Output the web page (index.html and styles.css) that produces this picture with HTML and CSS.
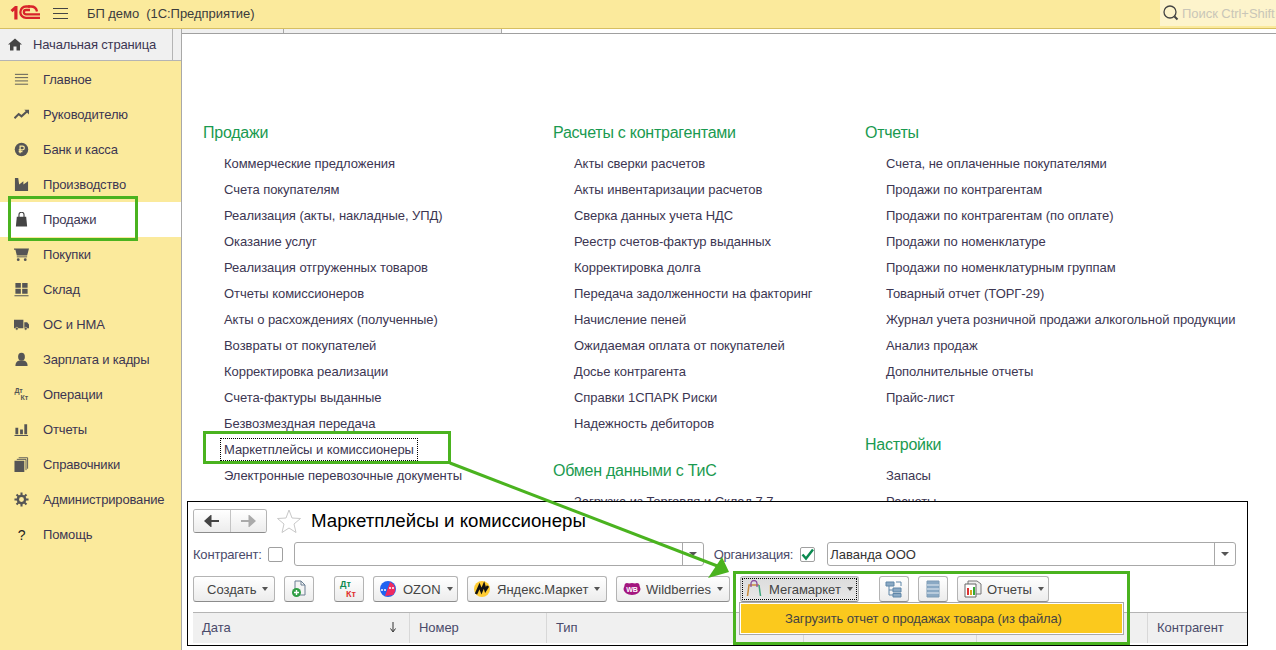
FILE: index.html
```html
<!DOCTYPE html>
<html lang="ru">
<head>
  <meta charset="UTF-8" />
  <title>БП демо (1С:Предприятие)</title>
  <link rel="stylesheet" href="styles.css">
</head>
<body>
  <header class="topbar">
    <svg class="logo" viewBox="0 0 30 15" width="30" height="15">
      <path d="M0.500 5 L5 1 H7.500 V14.500 H4.300 V5.500 L2.500 7.200 Z" fill="#d8232a"/>
      <path d="M20 1.500 H16 A5.500 5.500 0 0 0 16 12.800 H30 M20 5 H16 A2.100 2.100 0 0 0 16 9.300 H30" fill="none" stroke="#d8232a" stroke-width="2.300"/>
      <path d="M18 1.500 H21 Q26 1.500 27 6.500" fill="none" stroke="#d8232a" stroke-width="2.300"/>
    </svg>
    <div class="burger"><i></i><i></i><i></i></div>
    <div class="app-title">БП демо&nbsp; (1С:Предприятие)</div>
    <div class="search">
      <svg viewBox="0 0 18 18" width="18" height="18"><circle cx="8" cy="8" r="6" fill="none" stroke="#444" stroke-width="1.300"/><path d="M12.500 12.500 L15.500 15.500" stroke="#444" stroke-width="2"/></svg>
      <span>Поиск Ctrl+Shift</span>
    </div>
  </header>

  <div class="main">
    <aside class="sidebar">
      <div class="home-row">
        <div class="home-tab">
          <svg class="home-icon" viewBox="0 0 14 13" width="14" height="13"><path d="M7 0.500 L14 6.500 H12 V12.500 H8.500 V8.500 H5.500 V12.500 H2 V6.500 H0 Z" fill="#444"/></svg>
          <span>Начальная страница</span>
        </div>
      </div>
      <nav class="nav">
        <a class="nav-item"><svg viewBox="0 0 16 16"><path d="M1 2.500 H15 M1 6 H15 M1 9.500 H15 M1 13 H15" stroke="#555" stroke-width="1" fill="none"/></svg>Главное</a>
        <a class="nav-item"><svg viewBox="0 0 16 16"><path d="M0.500 12 L5 7.500 L8 10 L14 4.500" stroke="#555" stroke-width="2.200" fill="none"/><path d="M11 3 H16 V8 Z" fill="#555"/></svg>Руководителю</a>
        <a class="nav-item"><svg viewBox="0 0 16 16"><circle cx="8" cy="8" r="7.200" fill="#555"/><path d="M6.500 12 V4.500 H9 A2 2 0 0 1 9 8.500 H5 M5 10.300 H9" stroke="#fbea9c" stroke-width="1.300" fill="none"/></svg>Банк и касса</a>
        <a class="nav-item"><svg viewBox="0 0 16 16"><path d="M1 15 V1 H4.500 L5.500 8 L10 4.500 V8 L15 4.500 V15 Z" fill="#555"/></svg>Производство</a>
        <a class="nav-item active"><svg viewBox="0 0 16 16"><path d="M3 5 H13 L14 15.500 H2 Z" fill="#444"/><path d="M5.300 7 V3 A2.700 2.700 0 0 1 10.700 3 V7" stroke="#444" stroke-width="1.200" fill="none"/></svg>Продажи</a>
        <a class="nav-item"><svg viewBox="0 0 16 16"><path d="M0 1.500 H16 L14 9 H3 L1.500 3 H0 Z" fill="#555"/><path d="M3 10 H14 V11 H3 Z" fill="#555"/><circle cx="4.500" cy="13.500" r="1.500" fill="#555"/><circle cx="12" cy="13.500" r="1.500" fill="#555"/></svg>Покупки</a>
        <a class="nav-item"><svg viewBox="0 0 16 16"><path d="M1.500 1 H7.300 V6 H1.500 Z M8.700 1 H14.500 V6 H8.700 Z M1.500 7.300 H7.300 V12.500 H1.500 Z M8.700 7.300 H14.500 V12.500 H8.700 Z M0.500 14 H15.500 V15.300 H0.500 Z" fill="#555"/></svg>Склад</a>
        <a class="nav-item"><svg viewBox="0 0 16 16"><path d="M0 3 H10 V12 H0 Z M11 5.500 H14 L16 8 V12 H11 Z" fill="#555"/><circle cx="3" cy="12.500" r="1.500" fill="#555" stroke="#fbea9c" stroke-width="0.600"/><circle cx="12.500" cy="12.500" r="1.500" fill="#555" stroke="#fbea9c" stroke-width="0.600"/></svg>ОС и НМА</a>
        <a class="nav-item"><svg viewBox="0 0 16 16"><ellipse cx="8" cy="5" rx="3.600" ry="4.300" fill="#555"/><path d="M1.500 15 Q1.500 9.500 6 9 H10 Q14.500 9.500 14.500 15 Z" fill="#555"/></svg>Зарплата и кадры</a>
        <a class="nav-item"><svg viewBox="0 0 16 16"><text class="dt-small" x="0.500" y="6.500">Дт</text><text class="dt-small" x="7" y="14">Кт</text></svg>Операции</a>
        <a class="nav-item"><svg viewBox="0 0 16 16"><path d="M1.500 6 H4.500 V13 H1.500 Z M6.500 8 H9.500 V13 H6.500 Z M11 2.500 H14 V13 H11 Z M0.500 13.800 H15 V15 H0.500 Z" fill="#555"/></svg>Отчеты</a>
        <a class="nav-item"><svg viewBox="0 0 16 16"><path d="M0.500 4 H11 V16 H0.500 Z" fill="#555"/><path d="M3 2.500 H12.800 V14 M5 0.800 H14.500 V12.500" stroke="#555" stroke-width="1" fill="none"/></svg>Справочники</a>
        <a class="nav-item"><svg viewBox="0 0 16 16"><circle cx="8" cy="8" r="3.900" fill="none" stroke="#555" stroke-width="2.600"/><path d="M8 0.500 V15.500 M0.500 8 H15.500 M2.700 2.700 L13.300 13.300 M13.300 2.700 L2.700 13.300" stroke="#555" stroke-width="2.200" stroke-dasharray="2.800 9.400"/></svg>Администрирование</a>
        <a class="nav-item"><span class="help-mark">?</span>Помощь</a>
      </nav>
    </aside>

    <section class="workspace">
      <div class="tabs"><i class="tab tab-one"></i><i class="tab tab-two"></i></div>
      <div class="sections">
        <div class="col">
          <h2>Продажи</h2>
          <a>Коммерческие предложения</a>
          <a>Счета покупателям</a>
          <a>Реализация (акты, накладные, УПД)</a>
          <a>Оказание услуг</a>
          <a>Реализация отгруженных товаров</a>
          <a>Отчеты комиссионеров</a>
          <a>Акты о расхождениях (полученные)</a>
          <a>Возвраты от покупателей</a>
          <a>Корректировка реализации</a>
          <a>Счета-фактуры выданные</a>
          <a>Безвозмездная передача</a>
          <a><span class="focused">Маркетплейсы и комиссионеры</span></a>
          <a>Электронные перевозочные документы</a>
        </div>
        <div class="col">
          <h2>Расчеты с контрагентами</h2>
          <a>Акты сверки расчетов</a>
          <a>Акты инвентаризации расчетов</a>
          <a>Сверка данных учета НДС</a>
          <a>Реестр счетов-фактур выданных</a>
          <a>Корректировка долга</a>
          <a>Передача задолженности на факторинг</a>
          <a>Начисление пеней</a>
          <a>Ожидаемая оплата от покупателей</a>
          <a>Досье контрагента</a>
          <a>Справки 1СПАРК Риски</a>
          <a>Надежность дебиторов</a>
          <h2>Обмен данными с ТиС</h2>
          <a>Загрузка из Торговля и Склад 7.7</a>
        </div>
        <div class="col">
          <h2>Отчеты</h2>
          <a>Счета, не оплаченные покупателями</a>
          <a>Продажи по контрагентам</a>
          <a>Продажи по контрагентам (по оплате)</a>
          <a>Продажи по номенклатуре</a>
          <a>Продажи по номенклатурным группам</a>
          <a>Товарный отчет (ТОРГ-29)</a>
          <a>Журнал учета розничной продажи алкогольной продукции</a>
          <a>Анализ продаж</a>
          <a>Дополнительные отчеты</a>
          <a>Прайс-лист</a>
          <h2>Настройки</h2>
          <a>Запасы</a>
          <a>Расчеты</a>
        </div>
      </div>
    </section>
  </div>

  <!-- вставка со скриншотом формы поверх раздела -->
  <div class="inset">
    <div class="form-head">
      <div class="nav-btns">
        <button class="nav-btn"><svg viewBox="0 0 16 12" width="16" height="12"><path d="M15 6 H5 M6.500 1.500 L1.500 6 L6.500 10.500 Z" stroke="#444" stroke-width="2" fill="#444"/></svg></button>
        <button class="nav-btn"><svg viewBox="0 0 16 12" width="16" height="12"><path d="M1 6 H11 M9.500 1.500 L14.500 6 L9.500 10.500 Z" stroke="#aaa" stroke-width="2" fill="#aaa"/></svg></button>
      </div>
      <svg class="star" viewBox="0 0 24 24" width="24" height="24"><path d="M12 1 L15 9 L23.500 9.500 L17 15 L19 23.500 L12 19 L5 23.500 L7 15 L0.500 9.500 L9 9 Z" fill="#fff" stroke="#c8c8c8"/></svg>
      <h1>Маркетплейсы и комиссионеры</h1>
    </div>

    <div class="filters">
      <label class="field-label">Контрагент:</label>
      <span class="check"></span>
      <div class="select select-left"><span></span><b class="select-arrow"></b></div>
      <label class="field-label org-label">Организация:</label>
      <span class="check check-org">
        <svg viewBox="0 0 15 15" width="15" height="15"><path d="M2.500 7.500 L6 11.500 L13 2.500" stroke="#0a8a50" stroke-width="2.400" fill="none"/></svg>
      </span>
      <div class="select select-right"><span>Лаванда ООО</span><b class="select-arrow"></b></div>
    </div>

    <div class="toolbar">
      <button class="btn btn-create">Создать<i class="caret"></i></button>
      <button class="btn btn-icon">
        <svg viewBox="0 0 16 18" width="16" height="18"><path d="M4 1 H10 L14 5 V15 H4 Z M10 1 V5 H14" fill="#f4f4f4" stroke="#6a7f92"/><circle cx="5.500" cy="12.500" r="4.500" fill="#2f9e44"/><path d="M3 12.500 H8 M5.500 10 V15" stroke="#fff" stroke-width="1.400"/></svg>
      </button>
      <button class="btn btn-icon gap-left">
        <svg viewBox="0 0 20 20" width="20" height="20"><text class="dt-green" x="1" y="8">Дт</text><text class="dt-red" x="7" y="18">Кт</text></svg>
      </button>
      <button class="btn btn-brand btn-ozon">
        <svg viewBox="0 0 16 16" width="16" height="16"><circle cx="8" cy="8" r="8" fill="#1f62f0"/><path d="M10 1 A8 8 0 0 1 13 14 L5 15 Z" fill="#ef2a5f"/><path d="M1 9 H7 M9 7 H15" stroke="#fff" stroke-width="1.600" stroke-dasharray="2 1"/></svg>
        OZON<i class="caret"></i>
      </button>
      <button class="btn btn-brand btn-ya">
        <svg viewBox="0 0 16 16" width="16" height="16"><circle cx="8" cy="8" r="8" fill="#fc3"/><path d="M2 13 L5.500 5 L7.500 10 L10 4 L11.500 9 L14 5" stroke="#111" stroke-width="2.600" fill="none"/></svg>
        Яндекс.Маркет<i class="caret"></i>
      </button>
      <button class="btn btn-brand btn-wb">
        <svg viewBox="0 0 18 14" width="18" height="14"><ellipse cx="9" cy="7" rx="8.500" ry="6" fill="#a3167f"/><circle cx="4" cy="3.500" r="2.500" fill="#a3167f"/><circle cx="14" cy="3.500" r="2.500" fill="#a3167f"/><text class="wb-mark" x="9" y="9.500">WB</text></svg>
        Wildberries<i class="caret"></i>
      </button>
      <button class="btn btn-brand btn-pressed gap-mega">
        <span class="dotted">
          <svg viewBox="0 0 16 18" width="16" height="18"><path d="M1.500 16 L3 5 H13" fill="none" stroke="#c98a3c" stroke-width="1.500"/><path d="M13 5 L14.500 16" stroke="#3fa67c" stroke-width="1.500"/><path d="M5 7 V3.500 A3 3 0 0 1 11 3.500 V7" fill="none" stroke="#8a4f9e" stroke-width="1.300"/></svg>
          Мегамаркет<i class="caret"></i>
        </span>
      </button>
      <button class="btn btn-icon gap-left">
        <svg viewBox="0 0 18 18" width="18" height="18"><path d="M1 2 H9 V6 H1 Z M8 8 H16 V12 H8 Z M8 13.500 H16 V17 H8 Z" fill="#8aa9c4" stroke="#5f86a8"/><path d="M11 2 H16 V6 M4 6 V15 H8 M4 10 H8" fill="none" stroke="#5f86a8"/></svg>
      </button>
      <button class="btn btn-icon">
        <svg viewBox="0 0 14 18" width="14" height="18"><path d="M1 1 H13 V17 H1 Z" fill="#8aa9c4" stroke="#7d9bb5"/><path d="M1 5 H13 M1 9 H13 M1 13 H13" stroke="#e6eef4" stroke-width="1.200"/></svg>
      </button>
      <button class="btn btn-brand btn-reports">
        <svg viewBox="0 0 18 18" width="18" height="18"><path d="M4 1 H13 L17 4 V14 H4 Z" fill="#eee" stroke="#777"/><path d="M1 4 H12 V17 H1 Z" fill="#fff" stroke="#666"/><path d="M3 8 H5 V15 H3 Z" fill="#d33"/><path d="M6 10 H8 V15 H6 Z" fill="#d9a520"/><path d="M9 7 H11 V15 H9 Z" fill="#3a3"/></svg>
        Отчеты<i class="caret"></i>
      </button>
    </div>

    <div class="grid-head">
      <div class="grid-col col-date">Дата<svg class="sort-arrow" viewBox="0 0 8 11" width="8" height="11"><path d="M4 0 V9 M1.500 6.500 L4 10 L6.500 6.500" fill="none" stroke="#333"/></svg></div>
      <div class="grid-col col-num">Номер</div>
      <div class="grid-col col-type">Тип</div>
      <div class="grid-col col-blank1"></div>
      <div class="grid-col col-blank2"></div>
      <div class="grid-col col-contr">Контрагент</div>
    </div>

    <div class="menu"><div class="menu-item">Загрузить отчет о продажах товара (из файла)</div></div>
  </div>

  <svg class="marks" width="1276" height="650" viewBox="0 0 1276 650">
    <rect x="9.500" y="197.500" width="127" height="42"/>
    <rect x="204.500" y="432.500" width="245" height="30"/>
    <rect x="734.500" y="572.500" width="394" height="71"/>
    <path d="M450 463 L720 567"/>
    <polygon class="head" points="722,557 729,572 708,578"/>
  </svg>
</body>
</html>
```

FILE: styles.css
```css
* {
  box-sizing: border-box;
}

html,
body {
  margin: 0;
  height: 650px;
  overflow: hidden;
}

body {
  position: relative;
  font-family: "Liberation Sans", Arial, sans-serif;
  font-size: 13px;
  letter-spacing: -0.05px;
  color: #3c3652;
  background: #fff;
}

a {
  display: block;
}

/* верхняя полоса */
.topbar {
  display: flex;
  align-items: center;
  height: 29px;
  padding-left: 10px;
  background: #fbea9c;
  border-bottom: 1px solid #d6bf62;
}

.logo {
  margin-top: -3px;
}

.burger {
  display: flex;
  flex-direction: column;
  gap: 4px;
  width: 15px;
  margin-left: 13px;
  margin-top: -2px;
}

.burger i {
  display: block;
  height: 1px;
  background: #444;
}

.app-title {
  margin-left: 19px;
  margin-top: -2px;
  color: #3c3c3c;
}

.search {
  display: flex;
  align-items: center;
  gap: 2px;
  width: 116px;
  height: 26px;
  margin-left: auto;
  margin-bottom: 2px;
  padding-left: 2px;
  background: #fdf4cc;
  white-space: nowrap;
  color: #c9c6b8;
}

.search svg {
  flex: none;
}

.main {
  display: flex;
  height: 621px;
}

/* левая панель */
.sidebar {
  flex: none;
  width: 182px;
  letter-spacing: -0.15px;
  background: #fbea9c;
  border-right: 1px solid #a8a8a8;
}

.home-row {
  height: 32px;
  background: #f0f0f0;
  border-bottom: 1px solid #b4b4b4;
}

.home-tab {
  display: flex;
  align-items: center;
  width: 173px;
  height: 31px;
  padding-left: 8px;
  border-right: 1px solid #b4b4b4;
}

.home-icon {
  margin-right: 11px;
}

.nav {
  margin-top: 1px;
}

.nav-item {
  display: flex;
  align-items: center;
  height: 35px;
  padding-left: 14px;
}

.nav-item svg {
  flex: none;
  width: 15px;
  height: 15px;
  margin-right: 14px;
}

.nav-item.active {
  background: #fff;
}

.help-mark {
  width: 15px;
  margin-right: 14px;
  text-align: center;
  font-size: 14px;
  color: #222;
}

.dt-small {
  font-size: 7.500px;
  font-weight: bold;
  fill: #555;
}

/* разделы */
.workspace {
  flex: 1;
  min-width: 0;
}

.tabs {
  display: flex;
  height: 4px;
}

.tab {
  display: block;
  background: #f0f0f0;
  border-right: 1px solid #a8a8a8;
}

.tab-one {
  width: 102px;
}

.tab-two {
  width: 218px;
}

.sections {
  display: grid;
  grid-template-columns: 350px 312px 1fr;
  padding: 87px 0 0 21px;
  border-top: 1px solid #a0a0a0;
}

.col h2 {
  margin: 22px 0 6px;
  font-size: 16px;
  font-weight: normal;
  line-height: 24px;
  letter-spacing: -0.25px;
  color: #1a9a50;
}

.col h2:first-child {
  margin-top: 0;
}

.col a {
  height: 26px;
  padding-left: 21px;
  line-height: 26px;
  white-space: nowrap;
}

.focused {
  outline: 1px dotted #000;
  outline-offset: 3px;
}

/* вставка формы */
.inset {
  position: absolute;
  left: 187px;
  top: 501px;
  width: 1061px;
  height: 145px;
  padding: 6px 0 0 5px;
  background: #fff;
  border: 1px solid #000;
}

.form-head {
  display: flex;
  align-items: center;
  height: 25px;
}

.nav-btns {
  display: flex;
  width: 74px;
  height: 24px;
  border: 1px solid #b4b4b4;
  border-bottom-color: #8c8c8c;
  border-radius: 3px;
  overflow: hidden;
}

.nav-btn {
  display: flex;
  align-items: center;
  justify-content: center;
  flex: 1;
  padding: 0;
  border: 0;
  background: linear-gradient(#fff, #ececec);
}

.nav-btn + .nav-btn {
  border-left: 1px solid #c4c4c4;
}

.star {
  margin-left: 10px;
  margin-right: 10px;
}

h1 {
  margin: 0;
  font-size: 18.700px;
  font-weight: normal;
  letter-spacing: 0;
  color: #000;
}

.filters {
  display: flex;
  align-items: center;
  height: 24px;
  margin-top: 9px;
  letter-spacing: -0.2px;
}

.field-label {
  color: #4a4a6a;
}

.check {
  flex: none;
  width: 15px;
  height: 15px;
  margin-left: 6px;
  background: #fff;
  border: 1px solid #a0a0a0;
  border-radius: 2px;
}

.check-org {
  margin-left: 7px;
}

.check svg {
  display: block;
  margin: -1px;
}

.select {
  display: flex;
  align-items: center;
  flex: none;
  height: 24px;
  background: #fff;
  border: 1px solid #a8a8a8;
  border-radius: 3px;
}

.select span {
  flex: 1;
  padding-left: 2px;
  letter-spacing: 0;
  color: #333;
}

.select-arrow {
  position: relative;
  width: 21px;
  height: 100%;
  border-left: 1px solid #a8a8a8;
}

.select-arrow::after {
  content: "";
  position: absolute;
  left: 6px;
  top: 9px;
  border: 4px solid transparent;
  border-top-color: #555;
  border-bottom: 0;
}

.select-left {
  width: 410px;
  margin-left: 11px;
}

.org-label {
  margin-left: 10px;
}

.select-right {
  width: 409px;
  margin-left: 12px;
}

.toolbar {
  display: flex;
  gap: 9px;
  height: 27px;
  margin-top: 10px;
}

.btn {
  display: flex;
  align-items: center;
  flex: none;
  height: 26px;
  padding: 0 0 0 6px;
  font-family: inherit;
  font-size: 13px;
  color: #444;
  background: linear-gradient(#fff, #ececec);
  border: 1px solid #b4b4b4;
  border-bottom-color: #8c8c8c;
  border-radius: 3px;
  white-space: nowrap;
}

.btn svg {
  flex: none;
}

.btn-create {
  width: 82px;
  padding-left: 13px;
}

.btn-icon {
  width: 30px;
  padding: 0;
  justify-content: center;
}

.btn-brand svg {
  margin-right: 7px;
}

.btn-ozon {
  width: 85px;
}

.btn-ya {
  width: 140px;
}

.btn-wb {
  width: 114px;
}

.btn-wb svg {
  margin-right: 5px;
}

.btn-reports {
  width: 92px;
}

.btn-reports svg {
  margin-right: 5px;
}

.btn-pressed {
  width: 119px;
  padding: 0 2px;
  background: linear-gradient(#dcdcdc, #e8e8e8);
}

.dotted {
  display: flex;
  align-items: center;
  width: 100%;
  height: 20px;
  padding: 0 3px;
  outline: 1px dotted #000;
}

.gap-left {
  margin-left: 11px;
}

.gap-mega {
  margin-left: 1px;
}

.caret {
  margin-left: 6px;
  border: 3.500px solid transparent;
  border-top: 4px solid #555;
  border-bottom: 0;
}

.dt-green,
.dt-red {
  font-size: 9px;
  font-weight: bold;
}

.dt-green {
  fill: #0a8a50;
}

.dt-red {
  fill: #e03030;
}

.wb-mark {
  font-size: 7px;
  font-weight: bold;
  fill: #fff;
  text-anchor: middle;
}

.grid-head {
  display: flex;
  width: 1054px;
  height: 32px;
  margin-top: 9px;
  background: #f0f0f0;
  border-top: 1px solid #b4b4b4;
  border-bottom: 1px solid #fff;
}

.grid-col {
  display: flex;
  align-items: center;
  justify-content: space-between;
  padding: 0 8px 2px 9px;
  border-right: 1px solid #d8d8d8;
  color: #4a4a6a;
}

.sort-arrow {
  margin-right: 4px;
}

.col-date {
  width: 217px;
}

.col-num {
  width: 137px;
}

.col-type {
  width: 257px;
}

.col-blank1 {
  width: 173px;
}

.col-blank2 {
  width: 171px;
}

.col-contr {
  flex: 1;
  border-right: 0;
}

.menu {
  position: absolute;
  left: 551px;
  top: 100px;
  width: 385px;
  height: 33px;
  padding: 1px;
  background: #fff;
  border: 1px solid #a8a8a8;
}

.menu-item {
  height: 100%;
  padding-left: 44px;
  line-height: 29px;
  letter-spacing: -0.13px;
  color: #444;
  background: #fbc91d;
}

/* зелёные пометки поверх всего */
.marks {
  position: absolute;
  left: 0;
  top: 0;
  pointer-events: none;
}

.marks rect,
.marks path {
  fill: none;
  stroke: #4ab31f;
  stroke-width: 3;
}

.marks .head {
  fill: #4ab31f;
}
```
